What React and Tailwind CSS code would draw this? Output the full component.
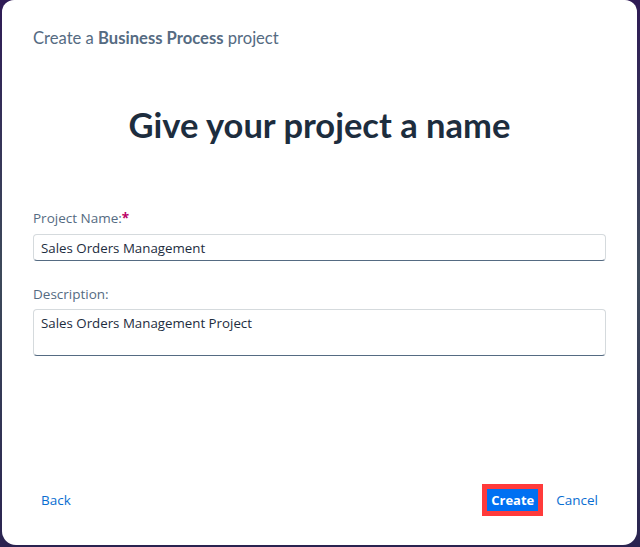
import React, { useState } from "react";

const App = () => {
  const [name, setName] = useState("Sales Orders Management");
  const [description, setDescription] = useState("Sales Orders Management Project");

  return (
    <div className="w-[640px] h-[547px] bg-gradient-to-b from-[#2e1a55] via-[#3d4a5a] to-[#2a2350] pl-[2px] pr-[3px] pb-[2px] font-['Open_Sans',sans-serif]">
      <div className="h-full bg-white rounded-b-[14px] rounded-t-[12px] flex flex-col px-[31px]">
        {/* Header */}
        <p className="mt-[28px] text-[16.6px] leading-5 text-[#556b82] font-['Lato',sans-serif]">
          Create a <span className="font-bold">Business Process</span> project
        </p>

        <h1 className="mt-[57px] text-center text-[34.5px] leading-10 font-bold text-[#1d2d3e] font-['Lato',sans-serif]">
          Give your project a name
        </h1>

        {/* Form */}
        <div className="mt-[63px] flex flex-col">
          <label className="text-[13.5px] leading-5 text-[#556b82]">
            Project Name:<span className="text-[#bb0066] font-bold">*</span>
          </label>
          <input
            type="text"
            value={name}
            onChange={(e) => setName(e.target.value)}
            className="mt-[6px] h-[27px] px-[7px] text-[13.3px] text-[#1d2d3e] border border-[#d5dadd] border-b-[#556b82] rounded-[4px] outline-none"
          />

          <label className="mt-[23px] text-[13.5px] leading-5 text-[#556b82]">Description:</label>
          <textarea
            value={description}
            onChange={(e) => setDescription(e.target.value)}
            className="mt-[5px] h-[47px] px-[7px] pt-[3px] text-[13.3px] leading-5 text-[#1d2d3e] border border-[#d5dadd] border-b-[#556b82] rounded-[4px] outline-none resize-none"
          />
        </div>

        {/* Footer */}
        <div className="mt-auto mb-[29px] flex items-center">
          <button type="button" className="ml-[8px] text-[13.5px] text-[#0a6ed1]">
            Back
          </button>
          <div className="ml-auto flex items-center">
            <div className="border-[5px] border-[#ff3b3b]">
              <button
                type="button"
                className="block h-[22px] px-[4px] bg-[#0070f2] text-white text-[13px] leading-[22px] font-bold"
              >
                Create
              </button>
            </div>
            <button type="button" className="ml-[13px] mr-[8px] text-[13.5px] text-[#0a6ed1]">
              Cancel
            </button>
          </div>
        </div>
      </div>
    </div>
  );
};

export default App;
